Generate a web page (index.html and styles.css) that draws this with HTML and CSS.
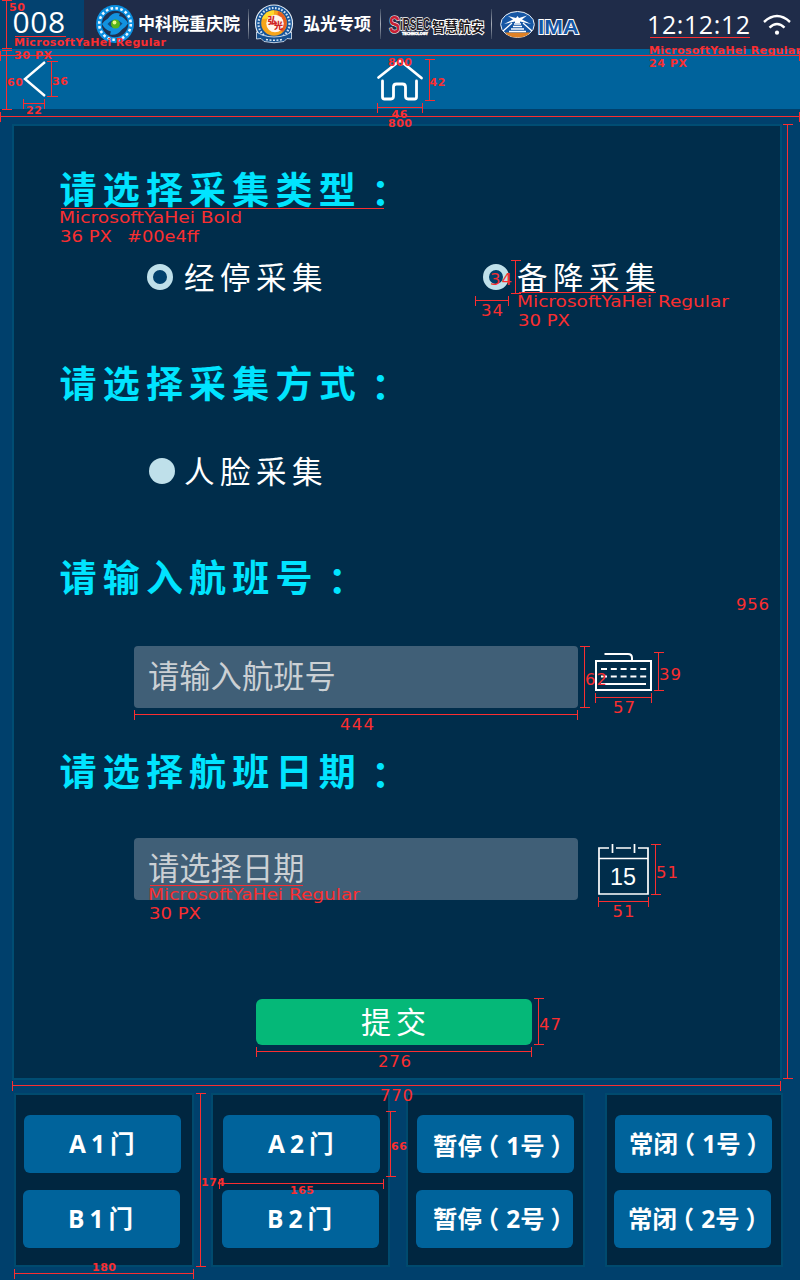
FILE: index.html
```html
<!DOCTYPE html>
<html lang="zh-CN">
<head>
<meta charset="utf-8">
<title>航班采集</title>
<link rel="stylesheet" href="styles.css">
</head>
<body>
<div class="screen">
  <header class="status">
    <div class="device">008</div>
    <svg class="logo-cas" width="40" height="40" viewBox="0 0 40 40">
      <circle cx="20" cy="20" r="19" fill="#0a8fe0"/>
      <circle cx="20" cy="20" r="15.8" fill="none" stroke="#e9f6ff" stroke-width="2.600" stroke-dasharray="2.6 2.36"/>
      <circle cx="20" cy="20" r="13.2" fill="#1d3152"/>
      <path d="M7 20Q10 16 13 14.500Q18 7.500 25 9.500L24 12Q30 13 33 19.500Q30 24 27 25.500Q22 32 15 30.500L16 27.500Q10 26 7 20Z" fill="#1292df"/>
      <path d="M12.500 20Q20 12 27.500 19.500Q20 28 12.500 20Z" fill="#124d80"/>
      <circle cx="20.500" cy="20" r="4.500" fill="#55b51c"/><circle cx="19.500" cy="18.500" r="1.900" fill="#eff98a"/>
    </svg>
    <span class="brand brand-cas">中科院重庆院</span>
    <i class="divider"></i>
    <svg class="logo-hg" width="40" height="40" viewBox="0 0 40 40">
      <circle cx="20" cy="19.500" r="18.500" fill="#14549a" stroke="#e6edf4" stroke-width="1.200"/>
      <circle cx="20" cy="19.500" r="15.500" fill="none" stroke="#cfe0f0" stroke-width="2.200" stroke-dasharray="1.700 1.500"/>
      <circle cx="20" cy="19" r="12.800" fill="#f6a51b"/>
      <path d="M8 15A12.800 12.800 0 0 1 20 6.200V14Z" fill="#ffd92d"/>
      <path d="M24 7A12.800 12.800 0 0 1 29 28L22 24Z" fill="#e85d20"/>
      <circle cx="21" cy="19.500" r="8.700" fill="#fff5ed"/>
      <text x="13.500" y="20" class="seal">弘</text><text x="20" y="25" class="seal">光</text>
      <path d="M2.500 28L8 31Q20 35 32 31L37.500 28V35L33 34.500L30 37.500Q20 40 10 37.500L7 34.500L2.500 35Z" fill="#15508f" stroke="#e2eaf2" stroke-width=".8"/>
      <path d="M12 35.500Q20 37 28 35.500" fill="none" stroke="#dce9f4" stroke-width="1.600" stroke-dasharray="2 1.500"/>
    </svg>
    <span class="brand brand-hg">弘光专项</span>
    <i class="divider"></i>
    <svg class="logo-sirsec" width="98" height="26" viewBox="0 0 98 26">
      <text class="sir-s" x="0" y="21" textLength="11" lengthAdjust="spacingAndGlyphs">S</text>
      <text class="sir" x="11" y="18" textLength="30" lengthAdjust="spacingAndGlyphs">iRSEC</text>
      <text class="sir-tag" x="13" y="22.500" textLength="26" lengthAdjust="spacingAndGlyphs">TECHNOLOGY</text>
      <text class="sir-cn" x="43" y="20" textLength="52" lengthAdjust="spacingAndGlyphs">智慧航安</text>
    </svg>
    <i class="divider"></i>
    <svg class="logo-ima" width="84" height="30" viewBox="0 0 84 30">
      <ellipse cx="17.500" cy="14.500" rx="16.800" ry="13" fill="#1556a4" stroke="#eef3f8"/>
      <path d="M5 22.500H30Q26 27.500 17.500 27.500Q9 27.500 5 22.500Z" fill="#df8125"/>
      <path d="M8 6L16 8L17.500 6L19 8L27 5.500L22 9.500L31 14L20 11.500V13H15V11.500L4 14L13 9.500Z" fill="#fff"/>
      <path d="M14 14H21M13 16.500H22M11 19H24M9 21.500H26M12 13L3 21M23 13L32 21" fill="none" stroke="#fff" stroke-width="1.300"/>
      <text class="ima" x="38" y="23.500" textLength="41" lengthAdjust="spacingAndGlyphs">IMA</text>
    </svg>
    <time class="clock">12:12:12</time>
    <svg class="wifi" width="28" height="22" viewBox="0 0 28 22" fill="none" stroke="#fff" stroke-width="2.400">
      <path d="M1 8Q14-3.800 27 8M6.500 13.700Q14 6.500 21.500 13.700"/><circle cx="14" cy="18.700" r="2.100" fill="#fff" stroke="none"/>
    </svg>
  </header>

  <nav class="nav">
    <svg class="back" width="24" height="38" viewBox="0 0 24 38"><path d="M22 2L2 19L22 36" fill="none" stroke="#fff" stroke-width="2.400"/></svg>
    <svg class="home" width="48" height="44" viewBox="0 0 48 44" fill="none" stroke="#fff" stroke-width="2.800" stroke-linecap="round" stroke-linejoin="round">
      <path d="M2.500 19.500L24 2.500L45.500 20"/><path d="M6.500 23V39Q6.500 41 8.500 41H15Q17.500 41 17.500 38V29Q17.500 26 20.500 26H26.500Q29.500 26 29.500 29V38Q29.500 41 32 41H38.500Q40.500 41 40.500 39V23"/>
    </svg>
  </nav>

  <main class="panel">
    <section class="group">
      <h2>请选择采集类型<span class="colon" lang="zh-TW">：</span></h2>
      <div class="options">
        <label class="option"><i class="radio ring"></i>经停采集</label>
        <label class="option second"><i class="radio ring"></i>备降采集</label>
      </div>
    </section>
    <section class="group">
      <h2>请选择采集方式<span class="colon" lang="zh-TW">：</span></h2>
      <div class="options">
        <label class="option face"><i class="radio"></i>人脸采集</label>
      </div>
    </section>
    <section class="group">
      <h2>请输入航班号<span class="colon" lang="zh-TW">：</span></h2>
      <div class="entry">
        <div class="field">请输入航班号</div>
        <svg class="keyboard" width="57" height="40" viewBox="0 0 57 40" fill="none" stroke="#fff" stroke-width="2">
          <path d="M1 9H56V38H1Z"/><path d="M9.500 2H33Q37 2 37 6V9"/><path d="M6 17H52" stroke-dasharray="6 3.800"/><path d="M6 24.500H52" stroke-dasharray="6 3.800"/><path d="M6 32H51"/>
        </svg>
      </div>
    </section>
    <section class="group">
      <h2>请选择航班日期<span class="colon" lang="zh-TW">：</span></h2>
      <div class="entry date">
        <div class="field">请选择日期</div>
        <svg class="calendar" width="51" height="51" viewBox="0 0 51 51" fill="none" stroke="#fff" stroke-width="1.700">
          <path d="M11 4H1V50H50V4H40M18 4H33M1 14.500H50M14.500 0V9M36.500 0V9"/>
          <text x="12" y="41" textLength="26" lengthAdjust="spacingAndGlyphs">15</text>
        </svg>
      </div>
    </section>
    <button class="submit">提交</button>
  </main>

  <footer class="gates">
    <div class="gate g1"><button class="door">A1门</button><button class="door">B1门</button></div>
    <div class="gate g2"><button class="door">A2门</button><button class="door">B2门</button></div>
    <div class="gate g3"><button class="low">暂停<span class="po">（</span>1号<span class="pc">）</span></button><button class="even">暂停<span class="po">（</span>2号<span class="pc">）</span></button></div>
    <div class="gate g4"><button>常闭<span class="po">（</span>1号<span class="pc">）</span></button><button>常闭<span class="po">（</span>2号<span class="pc">）</span></button></div>
  </footer>

  <!-- Dimension lines and type labels laid over the design -->
  <svg class="specs" width="800" height="1280" viewBox="0 0 800 1280">
    <g class="rules" transform="translate(.5 .5)">
      <path d="M6 0V48M1 0H11M1 48H11M6 50V109M1 50H11M1 109H11M14 36H65M0 55H800M0 50V60M799 50V60M0 116H800M0 111V121M799 111V121"/>
      <path d="M51 61V96M46 61H57M46 96H57M23 103H44M23 98V108M44 98V108M429 59V100M424 59H434M424 100H434M377 107H422M377 102V112M422 102V112M649 37H749"/>
      <path d="M787 124V1078M782 124H792M782 1078H792M60 208H383M515 260V293M510 260H520M510 293H520M475 300H508M475 295V305M508 295V305M518 292H655"/>
      <path d="M584 646V707M579 646H589M579 707H589M134 714H577M134 709V719M577 709V719M658 652V690M653 652H663M653 690H663M595 697H651M595 692V702M651 692V702"/>
      <path d="M149 885H302M655 844V894M650 844H660M650 894H660M598 901H648M598 896V906M648 896V906M538 998V1044M533 998H543M533 1044H543M256 1051H531M256 1046V1056M531 1046V1056"/>
      <path d="M12 1085H780M12 1080V1090M780 1080V1090M200 1093V1266M195 1093H205M195 1266H205M219 1183H383M219 1178V1188M383 1178V1188M390 1111V1176M385 1111H395M385 1176H395M14 1273H193M14 1268V1278M193 1268V1278"/>
    </g>
    <g class="small">
      <text x="9" y="11" textLength="16">50</text><text x="14" y="46" textLength="152">MicrosoftYaHei Regular</text><text x="14" y="59" textLength="38">30 PX</text>
      <text x="7" y="86" textLength="16">60</text><text x="52" y="85" textLength="16">36</text><text x="26" y="114" textLength="16">22</text>
      <text x="388" y="66" textLength="24">800</text><text x="429.500" y="86" textLength="16">42</text><text x="391.500" y="118" textLength="16">46</text><text x="388" y="127" textLength="24">800</text>
      <text x="649" y="54" textLength="152">MicrosoftYaHei Regular</text><text x="649" y="67" textLength="38">24 PX</text>
      <text x="201" y="1186" textLength="24">174</text><text x="290" y="1194" textLength="24">165</text><text x="391" y="1150" textLength="16">66</text><text x="92" y="1271" textLength="24">180</text>
    </g>
    <g class="large">
      <text x="59" y="223" textLength="183" lengthAdjust="spacingAndGlyphs">MicrosoftYaHei Bold</text><text x="60" y="242" textLength="52" lengthAdjust="spacingAndGlyphs">36 PX</text><text x="127" y="242" textLength="72" lengthAdjust="spacingAndGlyphs">#00e4ff</text>
      <text x="490" y="285" textLength="22">34</text><text x="481" y="316" textLength="22">34</text><text x="517" y="307" textLength="212" lengthAdjust="spacingAndGlyphs">MicrosoftYaHei Regular</text><text x="518" y="326" textLength="52" lengthAdjust="spacingAndGlyphs">30 PX</text>
      <text x="736" y="610" textLength="33">956</text><text x="585" y="685" textLength="22">62</text><text x="659" y="680" textLength="22">39</text><text x="613" y="713" textLength="22">57</text><text x="340" y="730" textLength="34">444</text>
      <text x="148" y="900" textLength="212" lengthAdjust="spacingAndGlyphs">MicrosoftYaHei Regular</text><text x="149" y="919" textLength="52" lengthAdjust="spacingAndGlyphs">30 PX</text>
      <text x="656" y="878" textLength="22">51</text><text x="612.500" y="917" textLength="22">51</text><text x="539" y="1030" textLength="22">47</text><text x="378" y="1067" textLength="33">276</text><text x="380" y="1101" textLength="33">770</text>
    </g>
  </svg>
</div>
</body>
</html>
```
FILE: styles.css
```css
* { box-sizing: border-box; }
body { margin: 0; background: #00406c; font-family: "Open Sans", "Noto Sans CJK SC", sans-serif; color: #fff; }
svg { flex: none; display: block; overflow: visible; }
button { display: block; border: 0; padding: 0; color: #fff; font-family: inherit; white-space: nowrap; }
.screen { position: relative; width: 800px; height: 1280px; overflow: hidden; background: #00406c; }

.status { display: flex; align-items: flex-start; height: 49px; background: #1f2c49; }
.device { flex: none; width: 84px; height: 49px; padding-left: 12.5px; background: #034270; font-size: 30px; line-height: 44px; letter-spacing: .6px; }
.logo-cas { margin: 4px 3px 0 11px; }
.brand { flex: none; margin-top: 10px; font-size: 17px; line-height: 28px; font-weight: 700; white-space: nowrap; }
.brand-cas { width: 110px; }
.brand-hg { width: 77px; margin-left: 9px; }
.divider { flex: none; width: 1px; height: 30px; margin-top: 9px; background: linear-gradient(#3b4860, #a7adb8 50%, #3b4860); }
.logo-hg { margin: 4px 0 0 5px; }
.seal { font-size: 9px; font-weight: 900; fill: #cf2322; }
.logo-sirsec { margin: 12px 4px 0 8px; }
.sir-s { font: 700 24px "Liberation Sans", sans-serif; fill: #c81f35; stroke: #fff; stroke-width: 1.2px; paint-order: stroke; }
.sir { font: 700 17px "Liberation Sans", sans-serif; fill: #271c25; stroke: #fff; stroke-width: 1.6px; paint-order: stroke; }
.sir-tag { font: 700 4px "Liberation Sans", sans-serif; fill: #fff; stroke: #fff; stroke-width: .5px; }
.sir-cn { font-size: 14px; font-weight: 700; fill: #1e1b22; stroke: #fff; stroke-width: 2px; paint-order: stroke; }
.logo-ima { margin: 10px 0 0 8px; }
.ima { font: 700 21px "Liberation Sans", sans-serif; fill: #1556a4; stroke: #fff; stroke-width: 2px; paint-order: stroke; }
.clock { flex: none; width: 116px; margin-left: 63px; font-size: 25px; line-height: 49px; letter-spacing: .6px; }
.wifi { margin-top: 14px; }

.nav { display: flex; align-items: flex-start; height: 60px; background: #00639c; }
.back { margin: 11px 0 0 23px; }
.home { margin: 9px 0 0 329px; }

.panel { height: 956px; width: 770px; margin: 15px 0 0 12px; padding-top: 40px; border: 2px solid #004d73; background: #002d4b; }
.group { height: 194px; }
h2 { margin: 0; padding-left: 45.5px; height: 44px; line-height: 44px; font-size: 37px; font-weight: 700; letter-spacing: 6.2px; color: #00e4ff; font-family: "Noto Sans CJK SC", sans-serif; }
.colon { position: relative; top: 4px; font-family: "Noto Sans CJK TC", sans-serif; }
.options { display: flex; height: 40px; margin-top: 47px; padding-left: 133px; }
.option { display: flex; align-items: center; gap: 11px; width: 336px; font-size: 30.500px; line-height: 40px; letter-spacing: 5.500px; }
.option.second { gap: 8px; width: 200px; }
.option.face { gap: 9px; padding-left: 2px; }
.radio { flex: none; width: 26px; height: 26px; border-radius: 50%; background: #bfe0ea; }
.radio.ring { background: #00406c; border: 6.5px solid #bfe0ea; }
.entry { display: flex; align-items: flex-start; margin: 48px 0 0 120px; }
.entry.date { margin-top: 46px; }
.field { width: 444px; height: 62px; padding-left: 14px; border-radius: 4px; background: #405f77; color: #cbd0d4; font-size: 31.300px; line-height: 61px; }
.keyboard { margin: 6px 0 0 17px; }
.calendar { margin: 6px 0 0 20px; }
.calendar text { font: 24px "Liberation Sans", sans-serif; fill: #fff; stroke: none; }
.submit { width: 276px; height: 46px; margin: 57px 0 0 242px; padding-left: 4px; border-radius: 6px; background: #05b878; font-size: 30px; line-height: 46px; letter-spacing: 5px; }

.gates { display: flex; margin-top: 13px; padding-left: 14px; }
.gate { flex: none; height: 174px; padding: 20px 0 0 8px; border: 2px solid #004a6e; background: #002640; }
.g1 { width: 180px; }
.g2 { width: 179px; margin-left: 17px; padding-left: 10px; }
.g3 { width: 179px; margin-left: 16px; padding-left: 9px; }
.g4 { width: 178px; margin-left: 20px; padding-left: 8px; }
.gate button { width: 157.400px; height: 58px; border-radius: 6px; background: #00639b; font-size: 24.400px; line-height: 58px; font-weight: 700; text-align: left; padding-left: 14px; }
.gate button + button { margin: 17px 0 0 -1px; }
.gate .door { padding-left: 45px; letter-spacing: 5px; font-size: 24.500px; }
.gate .low { padding: 2px 0 0 16px; }
.gate .even { padding-left: 17px; }
.po { margin: 0 7px 0 -7px; }
.pc { margin-left: 6px; }

.specs { position: absolute; left: 0; top: 0; pointer-events: none; }
.rules path { fill: none; stroke: #fa2e30; stroke-width: 1; shape-rendering: crispEdges; }
.small { font: 700 11px "DejaVu Sans", sans-serif; fill: #fa2e30; }
.large { font: 16.500px "DejaVu Sans", sans-serif; fill: #fa2e30; }
```
